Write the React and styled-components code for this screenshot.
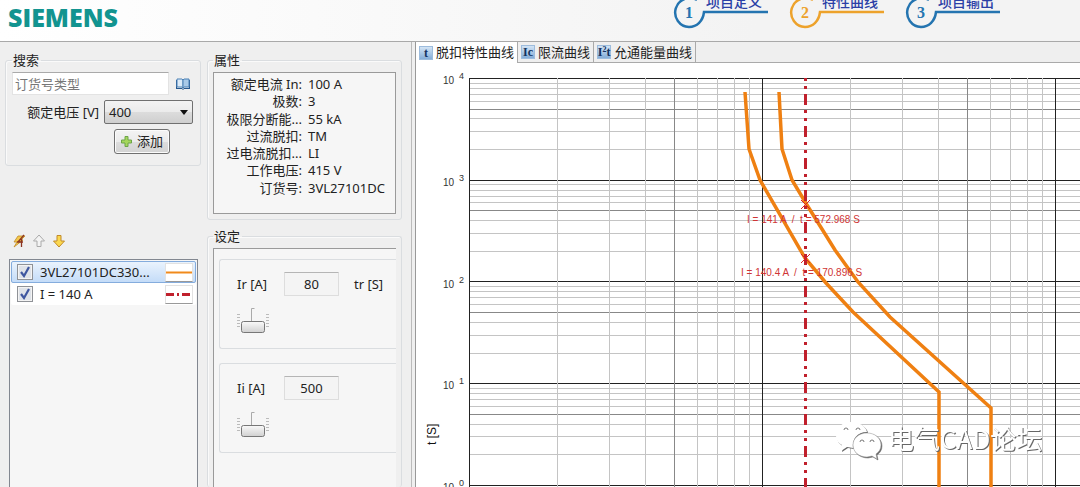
import React, { useState } from "react";
import styled, { createGlobalStyle } from "styled-components";

const GlobalStyle = createGlobalStyle`
  * {
    box-sizing: border-box;
  }
  body {
    margin: 0;
    overflow: hidden;
    background: #efefef;
    color: #222;
    font-family: "Noto Sans", "Noto Sans CJK SC", sans-serif;
    font-size: 13px;
    line-height: 17px;
  }
  button, input, select {
    font: inherit;
    color: inherit;
  }
`;

const Page = styled.div`
  display: flex;
  flex-direction: column;
  height: 100vh;
`;

const Header = styled.header`
  display: flex;
  justify-content: space-between;
  height: 41px;
  flex: none;
  padding: 0 80px 0 8px;
  overflow: hidden;
  background: linear-gradient(90deg, #fff, #f3f3f3 70%);
`;

const Logo = styled.h1`
  margin: 0;
  color: #129490;
  font-family: "Open Sans", sans-serif;
  font-size: 25px;
  font-weight: 800;
  line-height: 34px;
`;

const Steps = styled.nav`
  display: flex;
  gap: 20px;
  margin-top: -20px;
`;

const Step = styled.a`
  position: relative;
  width: 96px;
  height: 50px;
  padding: 14px 0 0 34px;
  color: #2b3fa6;
  font-family: "Liberation Serif", "Noto Sans CJK SC", serif;
  font-size: 14px;
  font-weight: 500;
  line-height: 18px;
  text-decoration: none;
  white-space: nowrap;
`;

const StepRing = styled.svg`
  position: absolute;
  inset: 0;
`;

const Body = styled.div`
  display: grid;
  grid-template-columns: 206px 206px minmax(0, 1fr);
  flex: 1;
  min-height: 0;
  border-top: 1px solid #a9a9a9;
`;

const Column = styled.div`
  display: flex;
  flex-direction: column;
  min-height: 0;
  padding: 10px 5px 0 5px;
`;

const DetailColumn = styled(Column)`
  gap: 8px;
  padding: 10px 9px 0 1px;
  border-right: 1px solid #bbb;
`;

const Group = styled.fieldset`
  display: flex;
  flex-direction: column;
  min-width: 0;
  margin: 0;
  padding: ${(p) => p.$pad || "3px 6px 6px"};
  border: 1px solid #dadde0;
  border-radius: 3px;
  box-shadow: inset 1px 1px #fafafa;
  ${(p) => p.$grow && "flex: 1; border-bottom: 0;"}
`;

const Legend = styled.legend`
  padding: 0 2px 0 1px;
`;

const Line = styled.div`
  display: flex;
  align-items: center;
  justify-content: flex-end;
  gap: 5px;
  margin-bottom: 5px;
`;

const SearchLine = styled(Line)`
  gap: 7px;
  padding-right: 4px;
`;

const SearchInput = styled.input`
  flex: 1;
  min-width: 0;
  height: 23px;
  padding: 0 2px;
  border: 1px solid #e3e3e3;
  border-top-color: #aaa;
  background: #fff;
  &::placeholder {
    color: #777;
    opacity: 1;
  }
`;

const IconButton = styled.button`
  display: flex;
  padding: 0;
  border: 0;
  background: none;
`;

const SelectWrap = styled.div`
  position: relative;
  width: 89px;
  margin-right: 1px;
  & > svg {
    position: absolute;
    right: 5px;
    top: 10px;
    pointer-events: none;
  }
`;

const Select = styled.select`
  display: block;
  width: 100%;
  height: 24px;
  padding: 0 4px;
  appearance: none;
  border: 1px solid #707070;
  border-radius: 2px;
  background: linear-gradient(#f3f3f3 0%, #ebebeb 50%, #dcdcdc 51%, #cfcfcf);
`;

const AddButton = styled.button`
  display: flex;
  align-items: center;
  justify-content: center;
  gap: 5px;
  width: 56px;
  height: 25px;
  margin-right: 24px;
  padding: 0;
  border: 1px solid #707070;
  border-radius: 3px;
  background: linear-gradient(#f3f3f3 0%, #ebebeb 50%, #dddddd 51%, #d3d3d3);
  box-shadow: inset 0 0 0 1px #fbfbfb;
`;

const Toolbar = styled.div`
  display: flex;
  gap: 6px;
  margin: 68px 0 11px 7px;
`;

const DeviceList = styled.ul`
  flex: 1;
  margin: 0 3px 0 4px;
  padding: 1px;
  border: 1px solid #828790;
  border-bottom: 0;
  background: #f6f6f6;
  list-style: none;
`;

const DeviceRow = styled.li`
  display: flex;
  align-items: center;
  height: 22px;
  padding: 0 2px 0 5px;
  border: 1px solid ${(p) => (p.$selected ? "#84acdd" : "transparent")};
  border-radius: 2px;
  background: ${(p) =>
    p.$selected ? "linear-gradient(#eaf3fd, #c4dcf8)" : "#fff"};
  & > label {
    display: flex;
    align-items: center;
    gap: 7px;
    flex: 1;
    white-space: nowrap;
  }
`;

const Check = styled.input`
  width: 16px;
  height: 16px;
  margin: 0;
  appearance: none;
  border: 1px solid #8f9297;
  background: #dfe3e9;
  box-shadow: inset 0 0 0 1px #f4f4f4;
  &:checked {
    background: #dfe3e9
      url("data:image/svg+xml,%3Csvg xmlns='http://www.w3.org/2000/svg' viewBox='0 0 14 14'%3E%3Cpath d='M3 7l3 4 5-9' fill='none' stroke='%233f57a0' stroke-width='2.2'/%3E%3C/svg%3E");
  }
`;

const Swatch = styled.svg`
  border: 1px solid #e2e2e2;
  border-bottom-color: #999;
  background: #fff;
`;

const Properties = styled.dl`
  display: grid;
  grid-template-columns: 88px 1fr;
  grid-auto-rows: 1fr;
  column-gap: 6px;
  min-height: 142px;
  margin: 0;
  padding: 3px 0 16px;
  border: 1px solid #9a9a9a;
  background: #f6f6f6;
  & > dt {
    text-align: right;
    white-space: nowrap;
  }
  & > dd {
    margin: 0;
    white-space: nowrap;
  }
`;

const Settings = styled.div`
  display: flex;
  flex-direction: column;
  gap: 14px;
  flex: 1;
  padding: 10px 0 0 5px;
  border-top: 1px solid #9a9a9a;
  border-left: 1px solid #9a9a9a;
  background: #f6f6f6;
`;

const SettingCard = styled.div`
  height: 90px;
  padding: 12px 0 0 17px;
  border: 1px solid #dadde0;
  border-right: 0;
  border-radius: 3px 0 0 3px;
`;

const SettingRow = styled.div`
  display: grid;
  grid-template-columns: 47px 55px 1fr;
  align-items: center;
`;

const Unit = styled.span`
  padding-left: 15px;
`;

const ValueInput = styled.input`
  width: 100%;
  height: 24px;
  padding: 0;
  border: 1px solid #ddd;
  border-top-color: #b5b5b5;
  border-radius: 1px;
  background: #f4f4f4;
  text-align: center;
`;

const Dial = styled.svg`
  display: block;
  margin-top: 11px;
`;

const ChartPane = styled.main`
  display: flex;
  flex-direction: column;
  margin-left: 3px;
  min-height: 0;
  overflow: hidden;
  border-left: 1px solid #999;
  background: #fff;
`;

const Tabs = styled.div`
  display: flex;
  flex: none;
  height: 21px;
  border-bottom: 1px solid #aaa;
  background: #efefef;
`;

const Tab = styled.button`
  display: flex;
  align-items: center;
  gap: 3px;
  height: ${(p) => (p.$active ? 21 : 20)}px;
  padding: 0 3px;
  border: 0;
  border-right: 1px solid #aaa;
  background: ${(p) => (p.$active ? "#fff" : "#efefef")};
  white-space: nowrap;
`;

const TabBadge = styled.span`
  display: flex;
  align-items: center;
  justify-content: center;
  width: 14px;
  height: 14px;
  background: linear-gradient(#d3e4f5, #84add8);
  border: 1px solid #9dbcdd;
  color: #12335f;
  font-family: "Liberation Serif", serif;
  font-size: 12px;
  font-weight: 700;
  line-height: 12px;
  & sup {
    font-size: 8px;
    line-height: 8px;
    align-self: flex-start;
  }
`;

const Chart = styled.svg`
  display: block;
  width: 100%;
  height: auto;
  flex: none;
  font-family: "Liberation Sans", sans-serif;
  & text {
    white-space: pre;
  }
`;

const Watermark = styled.g`
  fill: #fff;
  filter: drop-shadow(1px 1px 0 #666);
`;

const steps = [
  { n: 1, label: "项目定义", color: "#2474b0" },
  { n: 2, label: "特性曲线", color: "#eda22b" },
  { n: 3, label: "项目输出", color: "#2474b0" },
];

const properties = [
  ["额定电流 In:", "100 A"],
  ["极数:", "3"],
  ["极限分断能...", "55 kA"],
  ["过流脱扣:", "TM"],
  ["过电流脱扣...", "LI"],
  ["工作电压:", "415 V"],
  ["订货号:", "3VL27101DC"],
];

const tabs = [
  { id: "trip", label: "脱扣特性曲线", badge: "t" },
  { id: "limit", label: "限流曲线", badge: "Ic" },
  { id: "energy", label: "允通能量曲线", badge: <>I<sup>2</sup>t</> },
];

const StepLink = ({ n, label, color }) => (
  <Step href={`#step-${n}`}>
    <StepRing width="96" height="50" fill="none">
      <path
        d="M96 32H32C31 41 25 47 17 47A14.5 14.5 0 1 1 25 20"
        stroke={color}
        strokeWidth="2.5"
      />
      <text
        x="17"
        y="38"
        textAnchor="middle"
        fill={color}
        fontFamily="Liberation Serif, serif"
        fontSize="16"
        fontWeight="700"
      >
        {n}
      </text>
    </StepRing>
    {label}
  </Step>
);

const BookIcon = () => (
  <svg width="14" height="12" viewBox="0 0 14 12">
    <path d="M0 2h1v8h5l1 1 1-1h5V2h1v9H8l-1 1-1-1H0z" fill="#27598f" />
    <path d="M1 1h5l1 1v8L6 9H1z" fill="#dcebf8" stroke="#4a80b5" />
    <path d="M13 1H8L7 2v8l1-1h5z" fill="#a9cae8" stroke="#4a80b5" />
  </svg>
);

const PlusIcon = () => (
  <svg width="11" height="11" viewBox="0 0 11 11">
    <path
      d="M4 .5h3V4h3.500v3H7v3.500H4V7H.5V4H4z"
      fill="#a5d65c"
      stroke="#6da548"
    />
  </svg>
);

const EditIcon = () => (
  <svg width="14" height="14" viewBox="0 0 14 14" fill="none">
    <path
      d="M6 2h7L9 6h2L2 13l3-5H2z"
      fill="#f3c94d"
      stroke="#c08a28"
      strokeWidth=".8"
    />
    <path d="M12 1L6 8M9.500 5v8M5 8h6" stroke="#8c3520" strokeWidth="1.300" />
  </svg>
);

const ArrowIcon = ({ down }) => (
  <svg width="14" height="14" viewBox="0 0 14 14">
    <path
      d={
        down
          ? "M5 1.500h4V7h3.500L7 13 1.500 7H5z"
          : "M5 12.500h4V7h3.500L7 1 1.500 7H5z"
      }
      fill={down ? "#fbd84f" : "#f3f3f3"}
      stroke={down ? "#c18a2b" : "#aaa"}
      strokeLinejoin="round"
    />
  </svg>
);

const Setting = ({ id, label, value, extra }) => {
  const [current, setCurrent] = useState(value);
  return (
    <SettingCard>
      <SettingRow>
        <label htmlFor={id}>{label}</label>
        <ValueInput
          id={id}
          value={current}
          onChange={(e) => setCurrent(e.target.value)}
        />
        {extra && <Unit>{extra}</Unit>}
      </SettingRow>
      <Dial width="34" height="28" viewBox="0 0 34 28">
        <defs>
          <linearGradient id={`${id}-knob`} x2="0" y2="1">
            <stop stopColor="#fafafa" />
            <stop offset="1" stopColor="#d0d0d0" />
          </linearGradient>
        </defs>
        <path
          d="M0 7.500h3M0 10.500h3M0 13.500h3M0 16.500h3M0 19.500h3M29 7.500h3M29 10.500h3M29 13.500h3M29 16.500h3M29 19.500h3"
          stroke="#bbb"
        />
        <path d="M14.500 14V1.500h3" fill="none" stroke="#aaa" />
        <rect
          x="4.500"
          y="14.500"
          width="23"
          height="11"
          rx="2"
          fill={`url(#${id}-knob)`}
          stroke="#777"
        />
      </Dial>
    </SettingCard>
  );
};

// plot area, in chart units
const LEFT = 54;
const TOP = 15;
const DECADE_X = 293;
const DECADE_Y = 101.75;

const gridLines = (decades, size) => {
  const lines = [];
  for (let d = 0; d < decades; d++) {
    for (let k = 1; k < 10; k++) {
      lines.push({ k, at: Math.round((d + Math.log10(k)) * size) });
    }
  }
  // full decades are painted last, over the minor lines
  return lines.sort((a, b) => (a.k === 1) - (b.k === 1));
};

const gridColor = (k) => (k === 1 ? "#222" : k === 5 ? "#888" : "#c4c4c4");

const TripChart = () => {
  const bottom = TOP + 4 * DECADE_Y;
  return (
    <Chart viewBox="0 0 664 424">
      {gridLines(4, DECADE_Y)
        .concat({ k: 1, at: 4 * DECADE_Y })
        .map(({ k, at }) => (
          <path
            key={`h${at}`}
            d={`M${LEFT} ${Math.round(bottom - at) + 0.5}H664`}
            stroke={gridColor(k)}
          />
        ))}
      {gridLines(3, DECADE_X).map(({ k, at }) => (
        <path
          key={`v${at}`}
          d={`M${LEFT + at - 0.5} ${TOP}V424`}
          stroke={gridColor(k)}
        />
      ))}
      {[4, 3, 2, 1, 0].map((exp) => {
        const y = TOP + (4 - exp) * DECADE_Y;
        return (
          <g key={exp} fill="#333">
            <text x="27" y={y + 6} fontSize="10">
              10
            </text>
            <text x="43" y={y + 1} fontSize="9">
              {exp}
            </text>
          </g>
        );
      })}
      <text
        transform="translate(20 382) rotate(-90)"
        fontSize="12"
        fill="#111"
      >
        t [S]
      </text>
      <g fill="none" stroke="#ef8012" strokeWidth="3.500">
        <path d="M329 29L333 86 344 117 389 195 410 220 437 249 523 329V424" />
        <path d="M363 29L366 86 376 117 391 142 419 187 442 219 474 254 575 345V424" />
      </g>
      <path
        d="M389.500 15V424"
        stroke="#c0202c"
        strokeWidth="3"
        strokeDasharray="3 5 3 5 11 5"
      />
      <path d="M385 137l9 9m0-9l-9 9M385 191l9 9m0-9l-9 9" stroke="#d22" />
      <g fill="#cf3535" fontSize="10">
        <text x="331" y="160">{"I = 141 A  /  t = 572.968 S"}</text>
        <text x="325" y="213">{"I = 140.4 A  /  t = 170.896 S"}</text>
      </g>
      <Watermark>
        <path d="M435 359c-9 0-15 6-15 13 0 5 2 8 6 10l-1 6 6-4 6 1c-1-9 4-16 14-16-1-6-8-10-16-10z" />
        <path
          d="M451 370c-8 0-14 5-14 12s6 12 14 12l5-1 5 3-1-5c3-2 5-5 5-9 0-7-6-12-14-12z"
          stroke="#999"
          strokeWidth=".5"
        />
        <g fill="none" stroke="#777">
          <path d="M428 367a2 2 0 0 1 4 0M440 367a2 2 0 0 1 4 0M444 379a2 2 0 0 1 4 0M454 379a2 2 0 0 1 4 0" />
        </g>
        <text
          x="472"
          y="386"
          fontSize="26"
          fontFamily="Noto Sans CJK SC, sans-serif"
        >
          电气CAD论坛
        </text>
      </Watermark>
    </Chart>
  );
};

const App = () => {
  const [voltage, setVoltage] = useState("400");
  const [tab, setTab] = useState("trip");

  return (
    <>
      <GlobalStyle />
      <Page>
        <Header>
          <Logo>SIEMENS</Logo>
          <Steps>
            {steps.map((s) => (
              <StepLink key={s.n} {...s} />
            ))}
          </Steps>
        </Header>
        <Body>
          <Column>
            <Group>
              <Legend>搜索</Legend>
              <SearchLine>
                <SearchInput placeholder="订货号类型" aria-label="订货号类型" />
                <IconButton aria-label="目录">
                  <BookIcon />
                </IconButton>
              </SearchLine>
              <Line>
                <label htmlFor="voltage">额定电压 [V]</label>
                <SelectWrap>
                  <Select
                    id="voltage"
                    value={voltage}
                    onChange={(e) => setVoltage(e.target.value)}
                  >
                    <option>230</option>
                    <option>400</option>
                    <option>690</option>
                  </Select>
                  <svg width="8" height="5">
                    <path d="M0 0h8L4 5z" fill="#111" />
                  </svg>
                </SelectWrap>
              </Line>
              <Line>
                <AddButton>
                  <PlusIcon />
                  添加
                </AddButton>
              </Line>
            </Group>
            <Toolbar>
              <IconButton aria-label="编辑">
                <EditIcon />
              </IconButton>
              <IconButton aria-label="上移">
                <ArrowIcon />
              </IconButton>
              <IconButton aria-label="下移">
                <ArrowIcon down />
              </IconButton>
            </Toolbar>
            <DeviceList>
              <DeviceRow $selected>
                <label>
                  <Check type="checkbox" defaultChecked />
                  3VL27101DC330...
                </label>
                <Swatch width="28" height="19">
                  <path d="M0 8.500H28" stroke="#f08a1c" strokeWidth="2" />
                </Swatch>
              </DeviceRow>
              <DeviceRow>
                <label>
                  <Check type="checkbox" defaultChecked />I = 140 A
                </label>
                <Swatch width="28" height="19">
                  <path
                    d="M0 8.500H28"
                    stroke="#c0202c"
                    strokeWidth="3"
                    strokeDasharray="8 3 2 3"
                  />
                </Swatch>
              </DeviceRow>
            </DeviceList>
          </Column>
          <DetailColumn>
            <Group $pad="3px 5px 5px">
              <Legend>属性</Legend>
              <Properties>
                {properties.map(([name, value]) => (
                  <React.Fragment key={name}>
                    <dt>{name}</dt>
                    <dd>{value}</dd>
                  </React.Fragment>
                ))}
              </Properties>
            </Group>
            <Group $grow $pad="3px 5px 0">
              <Legend>设定</Legend>
              <Settings>
                <Setting id="ir" label="Ir [A]" value="80" extra="tr [S]" />
                <Setting id="ii" label="Ii [A]" value="500" />
              </Settings>
            </Group>
          </DetailColumn>
          <ChartPane>
            <Tabs role="tablist">
              {tabs.map((t) => (
                <Tab
                  key={t.id}
                  role="tab"
                  aria-selected={tab === t.id}
                  $active={tab === t.id}
                  onClick={() => setTab(t.id)}
                >
                  <TabBadge aria-hidden="true">{t.badge}</TabBadge>
                  {t.label}
                </Tab>
              ))}
            </Tabs>
            <TripChart />
          </ChartPane>
        </Body>
      </Page>
    </>
  );
};

export default App;
